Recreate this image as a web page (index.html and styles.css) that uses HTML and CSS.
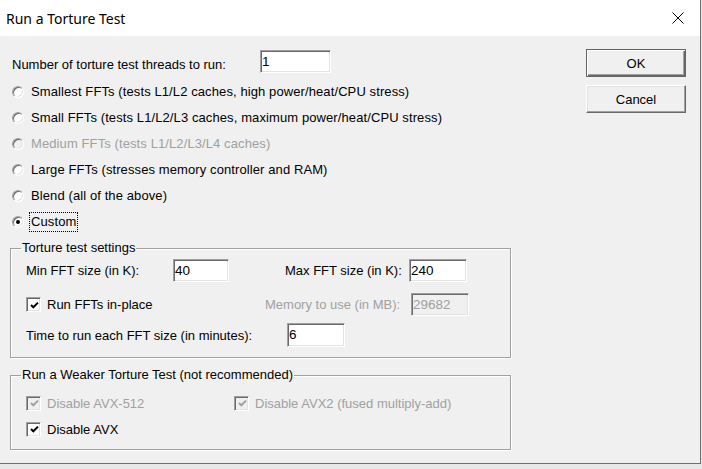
FILE: index.html
```html
<!DOCTYPE html>
<html>
<head>
<meta charset="utf-8">
<title>Run a Torture Test</title>
<link rel="stylesheet" href="styles.css">
</head>
<body>
<div class="window">
  <div class="titlebar">
    <span class="title">Run a Torture Test</span>
    <svg class="close" width="12" height="12" viewBox="0 0 12 12"><path d="M0.5 0.5 L11.5 11.5 M11.5 0.5 L0.5 11.5" stroke="#000" stroke-width="1" fill="none"/></svg>
  </div>
  <div class="client">
    <div class="main">
      <div class="threads">
        <span class="lbl threads-lbl">Number of torture test threads to run:</span>
        <span class="edit w71">1</span>
      </div>
      <div class="radios">
        <div class="radio-row"><span class="radio"></span><span class="rlabel">Smallest FFTs (tests L1/L2 caches, high power/heat/CPU stress)</span></div>
        <div class="radio-row"><span class="radio"></span><span class="rlabel">Small FFTs (tests L1/L2/L3 caches, maximum power/heat/CPU stress)</span></div>
        <div class="radio-row disabled"><span class="radio"></span><span class="rlabel">Medium FFTs (tests L1/L2/L3/L4 caches)</span></div>
        <div class="radio-row"><span class="radio"></span><span class="rlabel">Large FFTs (stresses memory controller and RAM)</span></div>
        <div class="radio-row"><span class="radio"></span><span class="rlabel">Blend (all of the above)</span></div>
        <div class="radio-row"><span class="radio checked"></span><span class="rlabel focus">Custom</span></div>
      </div>
      <fieldset class="group g1">
        <legend>Torture test settings</legend>
        <div class="grow r1">
          <span class="lbl w147">Min FFT size (in K):</span>
          <span class="edit w56">40</span>
          <span class="lbl w124 ml56">Max FFT size (in K):</span>
          <span class="edit w58">240</span>
        </div>
        <div class="grow r2">
          <span class="check-item w239"><span class="check"><svg width="11" height="11" viewBox="0 0 11 11"><path d="M2 5 L4.3 7.3 L9 2.6" stroke="#000" stroke-width="2" fill="none"/></svg></span><span class="clabel">Run FFTs in-place</span></span>
          <span class="lbl w146 dim">Memory to use (in MB):</span>
          <span class="edit w58 off">29682</span>
        </div>
        <div class="grow r3">
          <span class="lbl w261">Time to run each FFT size (in minutes):</span>
          <span class="edit w58 h24">6</span>
        </div>
      </fieldset>
      <fieldset class="group g2">
        <legend>Run a Weaker Torture Test (not recommended)</legend>
        <div class="grow crow">
          <span class="check-item w208 disabled"><span class="check"><svg width="11" height="11" viewBox="0 0 11 11"><path d="M2 5 L4.3 7.3 L9 2.6" stroke="#a0a0a0" stroke-width="2" fill="none"/></svg></span><span class="clabel">Disable AVX-512</span></span>
          <span class="check-item disabled"><span class="check"><svg width="11" height="11" viewBox="0 0 11 11"><path d="M2 5 L4.3 7.3 L9 2.6" stroke="#a0a0a0" stroke-width="2" fill="none"/></svg></span><span class="clabel">Disable AVX2 (fused multiply-add)</span></span>
        </div>
        <div class="grow crow">
          <span class="check-item"><span class="check"><svg width="11" height="11" viewBox="0 0 11 11"><path d="M2 5 L4.3 7.3 L9 2.6" stroke="#000" stroke-width="2" fill="none"/></svg></span><span class="clabel">Disable AVX</span></span>
        </div>
      </fieldset>
    </div>
    <div class="side">
      <button class="btn default">OK</button>
      <button class="btn">Cancel</button>
    </div>
  </div>
</div>
</body>
</html>
```
FILE: styles.css
```css
html, body {
  margin: 0;
  padding: 0;
}
body {
  background: #e8e8e8;
  font-family: "Liberation Sans", Arial, sans-serif;
  font-size: 13px;
  color: #000;
}
.window {
  width: 700px;
  height: 463px;
  border-right: 1px solid #6e6e6e;
  border-bottom: 1px solid #6e6e6e;
  display: flex;
  flex-direction: column;
  background: #f0f0f0;
}
.titlebar {
  height: 36px;
  flex: none;
  background: #fff;
  display: flex;
  align-items: center;
  padding-left: 6px;
}
.title {
  flex: 1;
  font-family: "Noto Sans", "Open Sans", sans-serif;
  font-size: 14px;
  color: #000;
}
.close {
  margin-right: 16px;
  display: block;
}
.client {
  flex: 1;
  display: flex;
}
.main {
  width: 501px;
  padding-left: 10px;
  flex: none;
}
.threads {
  margin-top: 13px;
  height: 25px;
  display: flex;
  align-items: center;
  padding-left: 2px;
}
.threads-lbl {
  width: 248px;
  padding-top: 6px;
}
.lbl {
  flex: none;
  white-space: nowrap;
}
.dim, .disabled .clabel, .disabled .rlabel {
  color: #a0a0a0;
}
.edit {
  flex: none;
  box-sizing: border-box;
  height: 23px;
  background: #fff;
  border: 1px solid;
  border-color: #a0a0a0 #fff #fff #a0a0a0;
  box-shadow: inset 1px 1px #696969, inset -1px -1px #e3e3e3;
  padding-left: 1px;
  line-height: 21px;
  font-size: 13.5px;
  white-space: nowrap;
}
.edit.off {
  background: #f0f0f0;
  color: #a0a0a0;
}
.h24 { height: 24px; line-height: 22px; }
.w71 { width: 71px; }
.w56 { width: 56px; }
.w58 { width: 58px; }
.w124 { width: 124px; }
.w146 { width: 146px; }
.w147 { width: 147px; }
.w208 { width: 208px; }
.w239 { width: 239px; }
.w261 { width: 261px; }
.ml56 { margin-left: 56px; }

.radios {
  margin-top: 5px;
}
.radio-row {
  height: 26px;
  display: flex;
  align-items: center;
  padding-left: 2px;
}
.radio {
  width: 12px;
  height: 12px;
  box-sizing: border-box;
  border-radius: 50%;
  background: #fff;
  border: 1px solid;
  border-color: #a0a0a0 #fff #fff #a0a0a0;
  box-shadow: inset 1px 1px #696969, inset -1px -1px #e3e3e3;
  display: flex;
  align-items: center;
  justify-content: center;
  flex: none;
}
.radio.checked::after {
  content: "";
  width: 4px;
  height: 4px;
  border-radius: 50%;
  background: #000;
}
.disabled .radio, .disabled .check {
  background: #f0f0f0;
}
.rlabel {
  margin-left: 6px;
  padding: 0 1px;
  line-height: 16px;
  white-space: nowrap;
  letter-spacing: 0.1px;
}
.rlabel.focus {
  outline: 1px dotted #000;
  outline-offset: 0;
  line-height: 16px;
  padding: 1px 1px 1px 1px;
}

.group {
  margin: 5px 0 0 0;
  width: 501px;
  box-sizing: border-box;
  min-width: 0;
  border: 1px solid #a0a0a0;
  box-shadow: inset 1px 1px #fff, 1px 1px #fff;
  padding: 3px 0 10px 0;
}
.group legend {
  margin-left: 10px;
  padding: 0 1px;
  line-height: 16px;
  white-space: nowrap;
}
.g2 {
  margin-top: 9px;
  padding: 7px 0 7px 0;
}
.grow {
  display: flex;
  align-items: center;
  padding-left: 15px;
}
.r1 { height: 23px; }
.r2 { height: 23px; margin-top: 11px; }
.r3 { height: 24px; margin-top: 7px; }
.crow { height: 26px; }

.check-item {
  display: flex;
  align-items: center;
  flex: none;
  white-space: nowrap;
}
.check {
  width: 15px;
  height: 15px;
  box-sizing: border-box;
  background: #fff;
  border: 1px solid;
  border-color: #a0a0a0 #fff #fff #a0a0a0;
  box-shadow: inset 1px 1px #696969, inset -1px -1px #e3e3e3;
  display: flex;
  align-items: center;
  justify-content: center;
  flex: none;
}
.check svg {
  display: block;
  margin: 1px 0 0 1px;
}
.clabel {
  margin-left: 6px;
}

.side {
  margin-left: 75px;
  padding-top: 13px;
  display: flex;
  flex-direction: column;
  gap: 8px;
}
.btn {
  width: 100px;
  height: 28px;
  box-sizing: border-box;
  background: #f0f0f0;
  font-family: "Liberation Sans", Arial, sans-serif;
  font-size: 13px;
  color: #000;
  border: 1px solid;
  border-color: #fff #696969 #696969 #fff;
  box-shadow: inset -1px -1px #a0a0a0, inset 1px 1px #e3e3e3;
  padding: 0;
  margin: 0;
}
.btn.default {
  border: 1px solid #646464;
  box-shadow: inset 1px 1px #fff, inset -1px -1px #696969, inset -2px -2px #a0a0a0;
}
```
